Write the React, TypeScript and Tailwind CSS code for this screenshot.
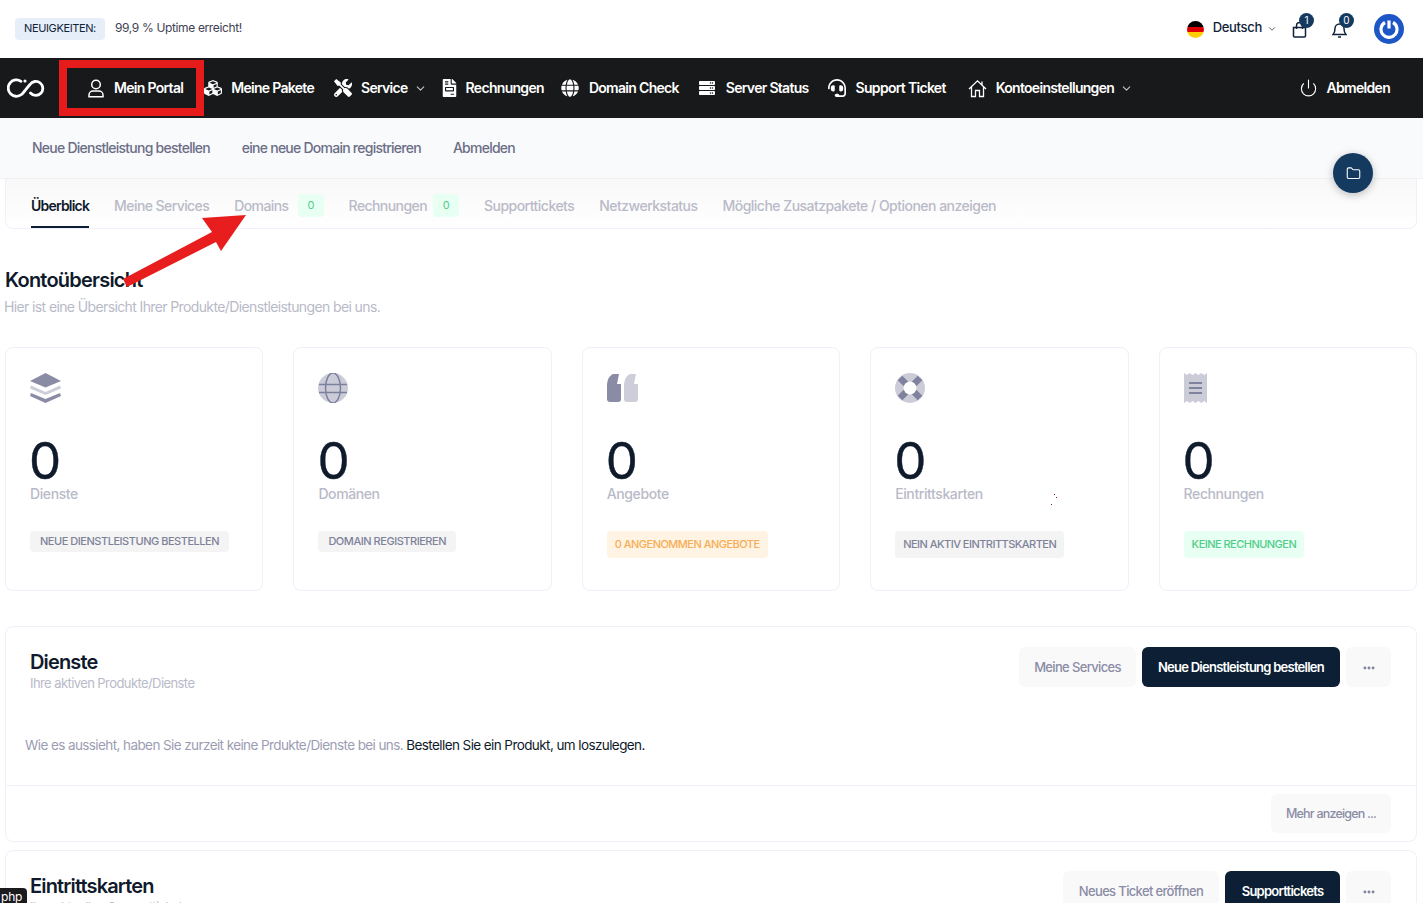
import React from "react";
import { ChevronDown, Ellipsis, Folder, Power } from "lucide-react";
import { FaCubes, FaFileInvoice, FaGlobe, FaHeadset, FaServer, FaTools } from "react-icons/fa";

const font = "[font-family:Inter,'Liberation_Sans',sans-serif]";

function NavItem({ icon, label, chevron }: { icon: React.ReactNode; label: string; chevron?: boolean }) {
  return (
    <div className="flex items-center">
      <span className="flex h-5 w-[19px] items-center justify-center text-white">{icon}</span>
      <span className="ml-[9px] pb-[2px] text-[14px] font-semibold tracking-[-0.7px] text-white">{label}</span>
      {chevron && <ChevronDown className="ml-[6px] h-[13px] w-[13px] text-[#c4c5d0]" />}
    </div>
  );
}

const UserIcon = () => (
  <svg width="18" height="19" viewBox="0 0 18 19" fill="none" stroke="#fff" strokeWidth="1.500">
    <circle cx="9" cy="5.500" r="4.300" />
    <path d="M2 17.800V16a4 4 0 0 1 4-4h6a4 4 0 0 1 4 4v1.800Z" />
  </svg>
);
const HomeIcon = () => (
  <svg width="19" height="19" viewBox="0 0 19 19" fill="none" stroke="#fff" strokeWidth="1.300">
    <path d="M1 10 9.500 1.800 18 10M3.500 8V17.500H7.500V11.500H11.500V17.500H15.500V8M14 2.500V6" />
  </svg>
);

const LayersIcon = () => (
  <svg width="31" height="30" viewBox="0 0 31 30">
    <path d="M15.500 0 31 8 15.500 14.500 0 8Z" fill="#8a8ca6" />
    <path d="M1 12.500 15.500 19 30 12.500 31 15.500 15.500 22 0 15.500Z" fill="#cdced9" />
    <path d="M1 20 15.500 26 30 20 31 23 15.500 30 0 23Z" fill="#8a8ca6" />
  </svg>
);
const GlobeIcon = () => (
  <svg width="30" height="30" viewBox="0 0 30 30">
    <circle cx="15" cy="15" r="15" fill="#cbccd7" />
    <ellipse cx="15" cy="15" rx="7.500" ry="15" fill="none" stroke="#7c809f" strokeWidth="1.500" />
    <path d="M1 11.500H29M1 19.500H29" stroke="#7c809f" strokeWidth="1.500" />
  </svg>
);
const QuoteIcon = () => (
  <svg width="31" height="28" viewBox="0 0 31 28">
    <path d="M6 0h6l-2 10h4v15a3 3 0 0 1-3 3H3a3 3 0 0 1-3-3V12C0 6 2 2 6 0Z" fill="#8a8ca6" />
    <path d="M23 0h6l-2 10h4v15a3 3 0 0 1-3 3h-8a3 3 0 0 1-3-3V12c0-6 2-10 6-12Z" fill="#cdced9" />
  </svg>
);
const BuoyIcon = () => (
  <svg width="30" height="30" viewBox="0 0 30 30">
    <circle cx="15" cy="15" r="15" fill="#cbccd7" />
    <path d="M5 5 25 25M25 5 5 25" stroke="#7f829d" strokeWidth="6.500" />
    <circle cx="15" cy="15" r="6.500" fill="#fff" />
  </svg>
);
const ReceiptIcon = () => (
  <svg width="23" height="30" viewBox="0 0 23 30">
    <path d="M0 0l2.900 2 2.800-2 2.900 2 2.900-2 2.900 2 2.800-2 2.900 2L23 0v30l-2.900-2-2.800 2-2.900-2-2.900 2-2.900-2-2.800 2-2.900-2L0 30Z" fill="#cbccd7" />
    <path d="M5 10H18M5 15H18M5 20H18" stroke="#80839e" strokeWidth="2" />
  </svg>
);

function StatCard({ icon, label, badge, badgeClass }: { icon: React.ReactNode; label: string; badge: string; badgeClass: string }) {
  return (
    <div className="flex h-[244px] flex-col rounded-lg border border-[#eff0fa] bg-white pl-6 pt-[25px]">
      <div className="flex h-[30px] items-center">{icon}</div>
      <div className="-ml-px mt-[35px] text-[51px] font-normal leading-[46px] text-[#0f1a2b] [-webkit-text-stroke:0.4px_#0f1a2b]">0</div>
      <div className="text-[14px] font-medium leading-[20px] tracking-[-0.4px] text-[#b9bac8]">{label}</div>
      <div className="mt-[27px] flex"><span className={badgeClass}>{badge}</span></div>
    </div>
  );
}

const badgeA = "flex h-[21px] items-center rounded bg-[#f4f4f5] px-[10px] text-[11px] font-medium uppercase tracking-[-0.47px] text-[#7e8299]";
const badgeB = "flex h-[27px] items-center rounded px-2 text-[11px] font-medium uppercase tracking-[-0.53px]";

function Btn({ children, dark, className }: { children: React.ReactNode; dark?: boolean; className: string }) {
  return (
    <span className={`flex items-center justify-center rounded-md ${dark ? "bg-[#0c1f35] font-semibold tracking-[-0.75px] text-white" : "bg-[#f9f9f9] font-medium text-[#8b8ca5]"} ${className}`}>
      {children}
    </span>
  );
}

function SectionHead({ title, sub, children }: { title: string; sub: string; children: React.ReactNode }) {
  return (
    <div className="flex justify-between pl-6 pr-[25px] pt-5">
      <div>
        <div className="mt-[3px] text-[20px] font-semibold leading-[25px] tracking-[-0.85px] text-[#101a2c]">{title}</div>
        <div className="text-[13px] leading-[17px] tracking-[-0.58px] text-[#b9bac8]">{sub}</div>
      </div>
      <div className="flex gap-[6px]">{children}</div>
    </div>
  );
}

const Dots = () => <Ellipsis className="h-[14px] w-[14px] text-[#7e8299]" strokeWidth={3} />;

const btnBase = "h-10 pt-px text-[13px]";
const btnLight = "tracking-[-0.65px]";

const tabs = ["Meine Services", "Domains", "Rechnungen", "Supporttickets", "Netzwerkstatus", "Mögliche Zusatzpakete / Optionen anzeigen"];
const wideTabs = ["Supporttickets", "Netzwerkstatus", "Mögliche Zusatzpakete / Optionen anzeigen"];

export default function App() {
  return (
    <div className={`relative h-[903px] w-full overflow-hidden bg-white ${font}`}>
      <header className="flex h-[58px] items-center justify-between pl-[15px] pr-[19px]">
        <div className="flex items-center">
          <span className="flex h-[22px] w-[90px] items-center justify-center rounded bg-[#e6eff9] pb-[1px] text-[11px] font-normal tracking-[-0.38px] text-[#10233a]">NEUIGKEITEN:</span>
          <span className="ml-[10px] pb-[2px] text-[12px] tracking-[-0.36px] text-[#3f4254]">99,9 % Uptime erreicht!</span>
        </div>
        <div className="flex items-center">
          <span className="h-[17px] w-[17px] overflow-hidden rounded-full">
            <span className="block h-[6px] bg-black" />
            <span className="block h-[5px] bg-[#dd0000]" />
            <span className="block h-[6px] bg-[#ffce00]" />
          </span>
          <span className="ml-[9px] pb-[2px] text-[13px] font-medium tracking-[-0.3px] text-[#10233a]">Deutsch</span>
          <ChevronDown className="ml-[5px] h-[10px] w-[10px] text-[#3f4254]" />
          <span className="relative ml-[15px] flex h-[16px] w-[15px] translate-y-[1px]">
            <svg width="15" height="16" viewBox="0 0 15 16" fill="none" stroke="#10233a" strokeWidth="1.500">
              <path d="M1.500 5.500h12V14a1 1 0 0 1-1 1h-10a1 1 0 0 1-1-1Z" />
              <path d="M4.500 7V3.500a3 3 0 0 1 6 0V7" />
            </svg>
            <span className="absolute -top-[9px] left-[7px] flex h-[15px] w-[15px] items-center justify-center rounded-full bg-[#143a5f] text-[10px] text-white">1</span>
          </span>
          <span className="relative ml-[25px] flex h-[16px] w-[15px] translate-y-[1px]">
            <svg width="15" height="16" viewBox="0 0 15 16" fill="none" stroke="#10233a" strokeWidth="1.500">
              <path d="M1 12.500c1.500-1.500 2-3 2-6a4.500 4.500 0 0 1 9 0c0 3 .5 4.500 2 6Z" />
              <path d="M6 15h3" />
            </svg>
            <span className="absolute -top-[9px] left-[7px] flex h-[15px] w-[15px] items-center justify-center rounded-full bg-[#143a5f] text-[10px] text-white">0</span>
          </span>
          <span className="ml-[27px] flex h-[30px] w-[30px] items-center justify-center rounded-full bg-[#1d56c5]">
            <svg width="20" height="20" viewBox="0 0 20 20" fill="none" stroke="#fff" strokeWidth="3.200">
              <path d="M6 3.500a8 8 0 1 0 8 0" />
              <path d="M10 1.500V9.500" />
            </svg>
          </span>
        </div>
      </header>

      <nav className="flex h-[60px] items-center justify-between bg-[#18191b] pl-[7px] pr-[33px]">
        <div className="flex items-center">
          <svg width="38" height="24" viewBox="0 0 38 24" fill="none" stroke="#fff" strokeWidth="2.800" strokeLinecap="round">
            <path d="M14 5.300A8.200 8.200 0 1 0 14.500 18.500C16.500 17 19 13 23 8.500A7 7 0 1 1 23.500 17" />
            <circle cx="18" cy="5" r="0.800" fill="#fff" strokeWidth="1.500" />
          </svg>
          <div className="ml-[41px] flex items-center gap-[19px]">
            <NavItem icon={<UserIcon />} label="Mein Portal" />
            <div className="ml-px"><NavItem icon={<FaCubes className="h-[18px] w-[18px]" />} label="Meine Pakete" /></div>
            <NavItem icon={<FaTools className="h-[18px] w-[18px]" />} label="Service" chevron />
            <div className="-ml-[8px] -mr-[2px]"><NavItem icon={<FaFileInvoice className="ml-[4px] h-[18px] w-[15px]" />} label="Rechnungen" /></div>
            <NavItem icon={<FaGlobe className="h-[18px] w-[18px]" />} label="Domain Check" />
            <NavItem icon={<FaServer className="h-[16px] w-[18px]" />} label="Server Status" />
            <NavItem icon={<FaHeadset className="h-[18px] w-[18px]" />} label="Support Ticket" />
            <div className="ml-[3px]"><NavItem icon={<HomeIcon />} label="Kontoeinstellungen" chevron /></div>
          </div>
        </div>
        <NavItem icon={<Power className="h-[20px] w-[20px]" strokeWidth={1.4} />} label="Abmelden" />
      </nav>

      <div className="flex h-[61px] items-center gap-8 border-b border-[#f0f0f3] bg-[#f9fafc] pb-[2px] pl-8 text-[14px] font-medium tracking-[-0.75px] text-[#6b6e86]">
        <span>Neue Dienstleistung bestellen</span>
        <span>eine neue Domain registrieren</span>
        <span>Abmelden</span>
      </div>

      <div className="pl-[5px] pr-[6px]">
        <div className="flex h-[50px] items-stretch gap-[25px] rounded-b-lg border border-t-0 border-[#eff0fa] bg-gradient-to-b from-[#f8f8f8] to-white pl-[25px] text-[14px] font-medium tracking-[-0.58px] text-[#b9bac8]">
          <span className="flex items-center border-b-2 border-[#0c1f35] pt-[5px] font-semibold tracking-[-0.8px] text-[#0f1a2b]">Überblick</span>
          {tabs.map((t) => (
            <span key={t} className={`flex items-center pt-[3px] ${t === "Rechnungen" ? "gap-[6px]" : "gap-[9px]"} ${wideTabs.includes(t) ? "tracking-[-0.52px]" : ""}`}>
              {t}
              {(t === "Domains" || t === "Rechnungen") && (
                <span className="flex h-[23px] w-[26px] items-center justify-center rounded bg-[#e8fff3] text-[11px] font-normal text-[#50cd89]">0</span>
              )}
            </span>
          ))}
        </div>

        <h1 className="mt-[37px] text-[20px] font-semibold leading-[28px] tracking-[-0.78px] text-[#0f1a2b]">Kontoübersicht</h1>
        <p className="-ml-px mt-[3px] text-[14px] leading-[20px] tracking-[-0.62px] text-[#b9bac8]">Hier ist eine Übersicht Ihrer Produkte/Dienstleistungen bei uns.</p>

        <div className="mt-[30px] grid grid-cols-5 gap-[30px]">
          <StatCard icon={<LayersIcon />} label="Dienste" badge="Neue Dienstleistung bestellen" badgeClass={badgeA} />
          <StatCard icon={<GlobeIcon />} label="Domänen" badge="Domain registrieren" badgeClass={badgeA} />
          <StatCard icon={<QuoteIcon />} label="Angebote" badge="0 Angenommen Angebote" badgeClass={`${badgeB} bg-[#fff3e3] text-[#f6ad55]`} />
          <StatCard icon={<BuoyIcon />} label="Eintrittskarten" badge="Nein aktiv Eintrittskarten" badgeClass={`${badgeB} bg-[#f4f4f5] text-[#7e8299]`} />
          <StatCard icon={<ReceiptIcon />} label="Rechnungen" badge="Keine Rechnungen" badgeClass={`${badgeB} bg-[#e8fff3] text-[#50cd89]`} />
        </div>

        <section className="mt-[35px] h-[216px] rounded-lg border border-[#eff0fa] bg-white">
          <SectionHead title="Dienste" sub="Ihre aktiven Produkte/Dienste">
            <Btn className={`w-[117px] ${btnBase} ${btnLight}`}>Meine Services</Btn>
            <Btn dark className={`w-[198px] ${btnBase}`}>Neue Dienstleistung bestellen</Btn>
            <Btn className={`w-[45px] ${btnBase}`}><Dots /></Btn>
          </SectionHead>
          <p className="mt-[43px] pl-[19px] text-[13.5px] leading-5 tracking-[-0.59px] text-[#9c9db2]">
            Wie es aussieht, haben Sie zurzeit keine Prdukte/Dienste bei uns. <span className="text-[#0f1a2b]">Bestellen Sie ein Produkt, um loszulegen.</span>
          </p>
          <div className="mt-[30px] flex h-[56px] items-center justify-end border-t border-[#eff0fa] pr-[25px]">
            <Btn className="h-[39px] w-[120px] pt-[1px] text-[12.5px] tracking-[-0.79px]">Mehr anzeigen ...</Btn>
          </div>
        </section>

        <section className="mt-2 rounded-lg border border-[#eff0fa] bg-white">
          <SectionHead title="Eintrittskarten" sub="Ihre aktuellen Supporttickets">
            <Btn className={`w-[156px] ${btnBase} ${btnLight}`}>Neues Ticket eröffnen</Btn>
            <Btn dark className={`w-[115px] ${btnBase}`}>Supporttickets</Btn>
            <Btn className={`w-[45px] ${btnBase}`}><Dots /></Btn>
          </SectionHead>
        </section>
      </div>

      {/* Overlays: annotation box, arrow, floating button, status tag, stray specks */}
      <div className="pointer-events-none absolute left-[59px] top-[60px] h-[56px] w-[145px] border-[8px] border-[#e61c1c]" />
      <svg className="pointer-events-none absolute left-0 top-0" width="300" height="300" viewBox="0 0 300 300">
        <polygon points="246,215 202,218 212,232 123,279 127,287 216,242 221,251" fill="#e81e1e" />
      </svg>
      <span className="absolute left-[1333px] top-[153px] flex h-10 w-10 items-center justify-center rounded-full bg-[#143a5f] shadow-[0_2px_8px_rgba(0,0,0,0.25)]">
        <Folder className="h-[15px] w-[15px] text-white" strokeWidth={1.7} />
      </span>
      <span className="absolute bottom-0 left-0 flex h-[15px] w-[27px] items-start rounded-tr bg-[#1b1b1d] pl-px text-[12px] leading-[18px] tracking-[-0.2px] text-white">php</span>
      <span className="absolute left-[1054px] top-[494px] h-px w-px bg-[#8b1a3a]" />
      <span className="absolute left-[1056px] top-[497px] h-px w-px bg-[#8b1a3a]" />
      <span className="absolute left-[1051px] top-[504px] h-px w-px bg-[#8b1a3a]" />
    </div>
  );
}
